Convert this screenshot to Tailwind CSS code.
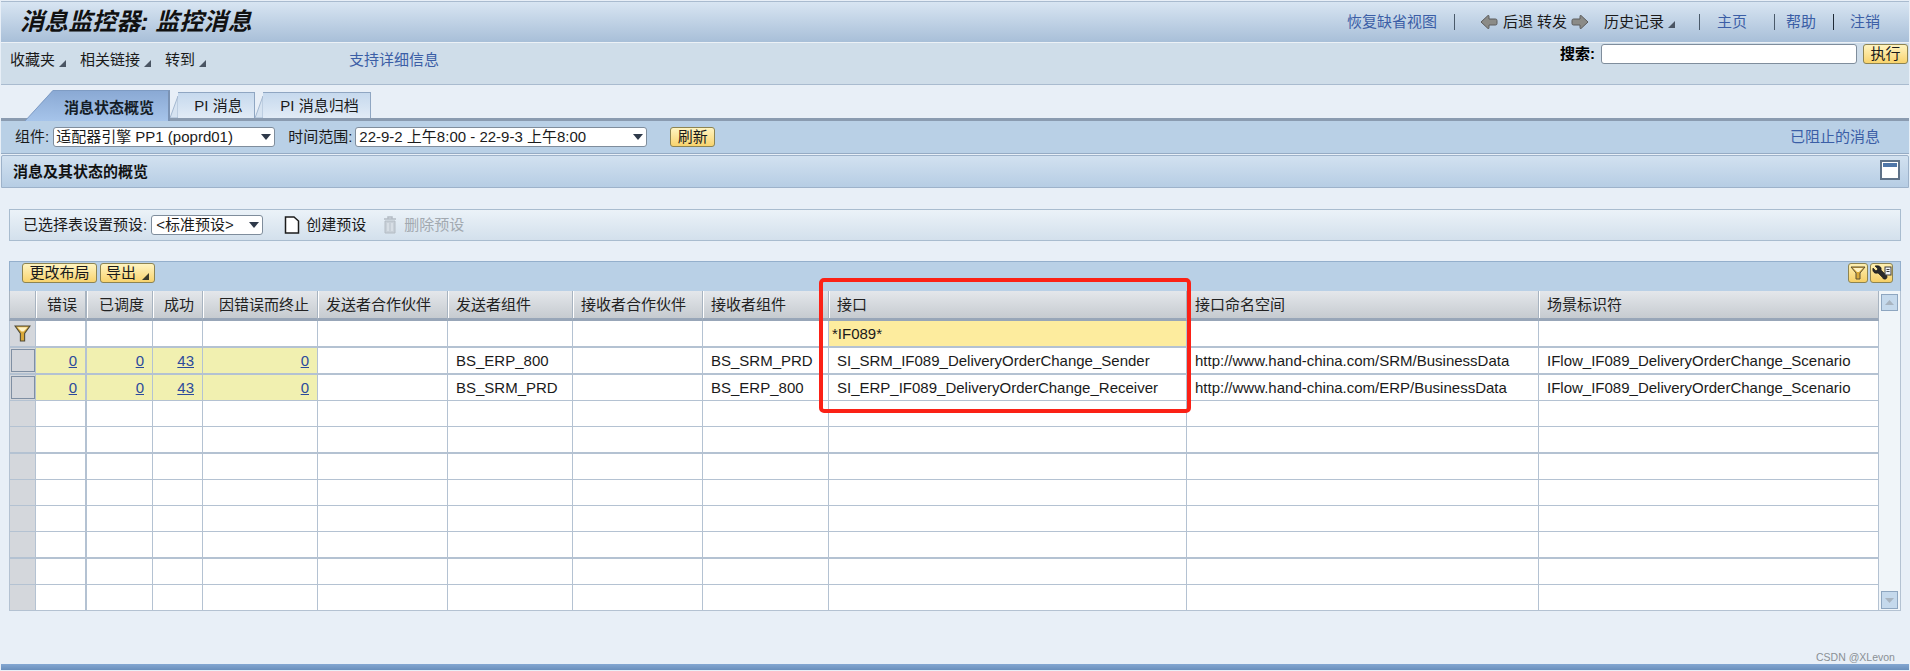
<!DOCTYPE html>
<html lang="zh-CN">
<head>
  <meta charset="UTF-8" />
  <title>消息监控器: 监控消息</title>
  <script src="https://cdn.jsdelivr.net/npm/@tailwindcss/browser@4"></script>
</head>
<body class="relative h-[671px] overflow-hidden bg-[#e8eff7] pt-px pl-px pr-px font-['Liberation_Sans','Noto_Sans_CJK_SC',sans-serif] text-[15px] leading-[18px] text-[#1a1a1a]">

  <!-- Title bar -->
  <header class="flex h-[41px] items-center border-t border-[#a9bbcf] bg-gradient-to-b from-[#d8e5f2] to-[#a8bfd8] pl-[19px] pr-[29px]">
    <h1 class="text-[24px] font-bold italic leading-[30px] tracking-[0.1px] text-[#111]">消息监控器: 监控消息</h1>
    <div class="ml-auto flex items-center text-[#3b5ea6]">
      <a>恢复缺省视图</a>
      <span class="ml-[17px] h-[16px] w-px bg-[#4a5a6a]"></span>
      <svg class="ml-[25px] h-[18px] w-[18px]" viewBox="0 0 18 18"><path d="M1 9 L8 2.500 Q9 2 9 3.500 V6 H15.500 Q17 6 17 7.500 V10.500 Q17 12 15.500 12 H9 V14.500 Q9 16 8 15.500 Z" fill="#8b8b87" stroke="#5c5c5c"/></svg>
      <span class="ml-[5px] text-[#1a1a1a]">后退</span>
      <span class="ml-[4px] text-[#1a1a1a]">转发</span>
      <svg class="ml-[4px] h-[18px] w-[18px]" viewBox="0 0 18 18"><path d="M17 9 L10 2.500 Q9 2 9 3.500 V6 H2.500 Q1 6 1 7.500 V10.500 Q1 12 2.500 12 H9 V14.500 Q9 16 10 15.500 Z" fill="#8b8b87" stroke="#5c5c5c"/></svg>
      <span class="ml-[15px] text-[#1a1a1a]">历史记录</span>
      <svg class="ml-[4px] mt-[5px] h-[7px] w-[7px]" viewBox="0 0 7 7"><path d="M7 0 V7 H0 Z" fill="#4a5563"/></svg>
      <span class="ml-[24px] h-[16px] w-px bg-[#4a5a6a]"></span>
      <a class="ml-[17px]">主页</a>
      <span class="ml-[27px] h-[16px] w-px bg-[#4a5a6a]"></span>
      <a class="ml-[11px]">帮助</a>
      <span class="ml-[17px] h-[16px] w-px bg-[#1f2a36]"></span>
      <a class="ml-[16px]">注销</a>
    </div>
  </header>

  <!-- Menu bar with search -->
  <div class="flex h-[43px] items-start border-y border-[#a9bbcf] border-t-white/60 bg-[#cfdde9] pl-[9px] pr-px">
    <div class="mt-[8px] flex items-center">
      <span>收藏夹</span>
      <svg class="ml-[4px] mt-[6px] h-[7px] w-[7px]" viewBox="0 0 7 7"><path d="M7 0 V7 H0 Z" fill="#4a5563"/></svg>
      <span class="ml-[14px]">相关链接</span>
      <svg class="ml-[4px] mt-[6px] h-[7px] w-[7px]" viewBox="0 0 7 7"><path d="M7 0 V7 H0 Z" fill="#4a5563"/></svg>
      <span class="ml-[14px]">转到</span>
      <svg class="ml-[4px] mt-[6px] h-[7px] w-[7px]" viewBox="0 0 7 7"><path d="M7 0 V7 H0 Z" fill="#4a5563"/></svg>
      <a class="ml-[143px] text-[#3b5ea6]">支持详细信息</a>
    </div>
    <div class="ml-auto mt-px flex items-center">
      <span class="font-bold text-black">搜索:</span>
      <input class="ml-[6px] h-[20px] w-[256px] rounded-[3px] border border-[#7f8d9c] bg-white" />
      <button class="ml-[6px] h-[20px] w-[45px] rounded-[3px] border border-[#8d8452] bg-gradient-to-b from-[#fff4c0] to-[#f8d36c] text-[15px] leading-[16px]">执行</button>
    </div>
  </div>

  <!-- Tabs -->
  <div class="mt-[5px] flex h-[28px] items-start pl-[24px]">
    <svg class="relative z-10 h-[31px] w-[29px] shrink-0" viewBox="0 0 29 31"><defs><linearGradient id="tabFill" x1="0" y1="0" x2="0" y2="1"><stop offset="0" stop-color="#8aa9d4"/><stop offset="1" stop-color="#a6c4ea"/></linearGradient></defs><path d="M0 31 L28 0 H29 V31 Z" fill="url(#tabFill)"/><path d="M0 31 L28 .5 H29" fill="none" stroke="#7f9cc4"/></svg>
    <div class="relative z-10 flex h-[31px] w-[116px] items-center justify-center border-t border-r-2 border-t-[#7f9cc4] border-r-[#7b93b4] bg-gradient-to-b from-[#8aa9d4] to-[#a6c4ea] pr-[4px] pt-[3px] font-bold text-[#141c26]">消息状态概览</div>
    <svg class="mt-[2px] h-[26px] w-[8px] shrink-0" viewBox="0 0 8 26"><path d="M0 26 L8 4 V26 Z" fill="#d6e3f1" stroke="#a4b8d0"/></svg>
    <div class="mt-[2px] flex h-[26px] w-[77px] items-center justify-center border-t border-r border-[#8fa6c2] bg-gradient-to-b from-[#c6d9ed] to-[#e1ebf6] pl-[5px]">PI 消息</div>
    <svg class="mt-[2px] h-[26px] w-[8px] shrink-0" viewBox="0 0 8 26"><path d="M0 26 L8 4 V26 Z" fill="#d6e3f1" stroke="#a4b8d0"/></svg>
    <div class="mt-[2px] flex h-[26px] w-[108px] items-center justify-center border-t border-r border-[#8fa6c2] bg-gradient-to-b from-[#c6d9ed] to-[#e1ebf6] pl-[6px]">PI 消息归档</div>
  </div>

  <!-- Filter bar -->
  <div class="flex h-[36px] items-center border-t-[3px] border-b border-t-[#8a9bb0] border-b-[#95abc4] bg-[#b9d0e6] pl-[14px] pr-[29px]">
    <span>组件:</span>
    <div class="ml-[4px] flex h-[20px] w-[222px] items-center justify-between rounded-[3px] border border-[#7f8d9c] bg-white pl-[2px] pr-[3px]">
      <span>适配器引擎 PP1 (poprd01)</span>
      <svg class="h-[6px] w-[10px]" viewBox="0 0 10 6"><path d="M0 0 H10 L5 6 Z" fill="#2f3a4a"/></svg>
    </div>
    <span class="ml-[13px]">时间范围:</span>
    <div class="ml-[3px] flex h-[20px] w-[292px] items-center justify-between rounded-[3px] border border-[#7f8d9c] bg-white pl-[3px] pr-[3px]">
      <span>22-9-2 上午8:00 - 22-9-3 上午8:00</span>
      <svg class="h-[6px] w-[10px]" viewBox="0 0 10 6"><path d="M0 0 H10 L5 6 Z" fill="#2f3a4a"/></svg>
    </div>
    <button class="ml-[23px] h-[20px] w-[45px] rounded-[3px] border border-[#8d8452] bg-gradient-to-b from-[#fff4c0] to-[#f8d36c] leading-[16px]">刷新</button>
    <a class="ml-auto text-[#3b5ea6]">已阻止的消息</a>
  </div>

  <!-- Section header -->
  <div class="mt-px flex h-[33px] items-center justify-between rounded-t-[2px] border border-[#9db2ca] bg-gradient-to-b from-[#d2e1f0] to-[#b6cde4] pl-[11px] pr-[8px]">
    <h2 class="font-bold text-[#111]">消息及其状态的概览</h2>
    <div class="-mt-[4px] h-[20px] w-[20px] border-2 border-[#5f7288] bg-white">
      <div class="mx-px mt-px h-[4px] bg-[#4f76a8]"></div>
    </div>
  </div>

  <div class="ml-[8px] mr-[8px]">
    <!-- Table presets -->
    <div class="mt-[21px] flex h-[32px] items-center border border-[#a9bccf] bg-gradient-to-b from-[#ebf2f8] to-[#d3e0ec] pl-[13px]">
      <span>已选择表设置预设:</span>
      <div class="ml-[4px] flex h-[20px] w-[112px] items-center justify-between rounded-[3px] border border-[#7f8d9c] bg-white pl-[4px] pr-[3px]">
        <span>&lt;标准预设&gt;</span>
        <svg class="h-[6px] w-[10px]" viewBox="0 0 10 6"><path d="M0 0 H10 L5 6 Z" fill="#2f3a4a"/></svg>
      </div>
      <svg class="ml-[21px] h-[18px] w-[16px]" viewBox="0 0 16 18"><path d="M1.500 1 H10 L14.500 5 V17 H1.500 Z" fill="#fff" stroke="#1c1c1c" stroke-width="1.500"/></svg>
      <span class="ml-[6px]">创建预设</span>
      <svg class="ml-[17px] h-[18px] w-[14px]" viewBox="0 0 14 18"><path d="M1 3 H13 M5 3 V1 H9 V3" fill="none" stroke="#b4bcc4" stroke-width="1.500"/><path d="M2 5 H12 V17 H2 Z" fill="#c8d0d8" stroke="#b4bcc4"/><path d="M5 7 V15 M9 7 V15" stroke="#e6ecf2"/></svg>
      <span class="ml-[7px] text-[#a2a9b0]">删除预设</span>
    </div>

    <!-- Table toolbar -->
    <div class="mt-[20px] flex h-[30px] items-start border border-b-0 border-[#94afcc] bg-[#b9d0e6] pl-[12px] pr-[7px] pt-px">
      <button class="h-[20px] w-[75px] rounded-[3px] border border-[#8d8452] bg-gradient-to-b from-[#fff4c0] to-[#f8d36c] leading-[16px]">更改布局</button>
      <button class="ml-[3px] flex h-[20px] w-[55px] items-center rounded-[3px] border border-[#8d8452] bg-gradient-to-b from-[#fff4c0] to-[#f8d36c] pl-[5px] leading-[16px]">导出
        <svg class="ml-[6px] mt-[6px] h-[7px] w-[7px]" viewBox="0 0 7 7"><path d="M7 0 V7 H0 Z" fill="#3a3a2a"/></svg>
      </button>
      <button class="ml-auto flex h-[20px] w-[20px] items-center justify-center rounded-[3px] border border-[#8d8452] bg-gradient-to-b from-[#fff0b0] to-[#f6cf66]">
        <svg class="h-[16px] w-[16px]" viewBox="0 0 16 16"><path d="M1 2 H15 L10 8 V14 H6 V8 Z" fill="#d9a93a" stroke="#5a5136"/><path d="M3 3 H13 L9 7 H7 Z" fill="#fff3c4"/></svg>
      </button>
      <button class="ml-[2px] flex h-[20px] w-[23px] items-center justify-center rounded-[3px] border border-[#8d8452] bg-gradient-to-b from-[#fff0b0] to-[#f6cf66]">
        <svg class="h-[16px] w-[20px]" viewBox="0 0 20 16"><path d="M1 3 L4 6 L6 4 L3 1 C7 0 10 2 9 5 L14 10 C16 11 15 15 12 14 C11 14 11 13 10 12 L6 8 C3 9 0 7 1 3 Z" fill="#2a2a2a" stroke="#111" stroke-width=".6"/><rect x="13" y="2" width="6" height="8" fill="#eef2f6" stroke="#3a3a3a"/><path d="M14.500 4.500 H17.500 M14.500 6.500 H17.500" stroke="#3a3a3a"/></svg>
      </button>
    </div>

    <!-- Table and its scrollbar -->
    <div class="flex">
      <table class="w-[1870px] table-fixed border-separate border-spacing-0">
        <colgroup>
          <col class="w-[27px]"><col class="w-[51px]"><col class="w-[66px]"><col class="w-[50px]"><col class="w-[115px]"><col class="w-[130px]"><col class="w-[125px]"><col class="w-[130px]"><col class="w-[126px]"><col class="w-[358px]"><col class="w-[352px]"><col class="w-[340px]">
        </colgroup>
        <thead>
          <tr id="tableHead"></tr>
        </thead>
        <tbody id="tableBody"></tbody>
      </table>
      <div class="flex h-[320px] w-[22px] flex-col justify-between border-r border-b border-[#b4c2d2] bg-[#f0f5f9] pb-px pl-[2px] pr-[2px] pt-[3px]">
        <div class="flex h-[17px] w-[17px] items-center justify-center border border-[#8ea6c0] bg-[#c5d9ec]">
          <svg class="h-[5px] w-[9px]" viewBox="0 0 9 5"><path d="M0 5 H9 L4.500 0 Z" fill="#a8b4c0"/></svg>
        </div>
        <div class="flex h-[18px] w-[17px] items-center justify-center border border-[#8ea6c0] bg-[#c5d9ec]">
          <svg class="h-[5px] w-[9px]" viewBox="0 0 9 5"><path d="M0 0 H9 L4.500 5 Z" fill="#a8b4c0"/></svg>
        </div>
      </div>
    </div>
  </div>

  <!-- Footer strip -->
  <div class="absolute bottom-px left-px right-px h-[6px] bg-gradient-to-b from-[#84a7d2] to-[#6a8fbc]"></div>

  <!-- Red marker drawn on the screenshot -->
  <div class="absolute left-[819px] top-[278px] h-[135px] w-[372px] rounded-[5px] border-4 border-[#fb2116]"></div>

  <!-- Watermark -->
  <div class="absolute left-[1816px] top-[650px] text-[10.5px] leading-[14px] text-[#8a8f95]">CSDN @XLevon</div>

  <script>
    const headers = ["错误", "已调度", "成功", "因错误而终止", "发送者合作伙伴", "发送者组件", "接收者合作伙伴", "接收者组件", "接口", "接口命名空间", "场景标识符"];
    const rows = [
      ["0", "0", "43", "0", "", "BS_ERP_800", "", "BS_SRM_PRD", "SI_SRM_IF089_DeliveryOrderChange_Sender", "http://www.hand-china.com/SRM/BusinessData", "IFlow_IF089_DeliveryOrderChange_Scenario"],
      ["0", "0", "43", "0", "", "BS_SRM_PRD", "", "BS_ERP_800", "SI_ERP_IF089_DeliveryOrderChange_Receiver", "http://www.hand-china.com/ERP/BusinessData", "IFlow_IF089_DeliveryOrderChange_Scenario"]
    ];
    // rows that end on a heavier rule
    const heavyRows = [0, 1, 4, 8];

    function renderHead() {
      let html = `<th class="h-[30px] border-l border-r border-b-[3px] border-[#a7b3c0] border-b-[#98a6b8] bg-gradient-to-b from-[#e4e7eb] to-[#c6cbd0]"></th>`;
      headers.forEach((text, i) => {
        const align = i < 4 ? "text-right" : "text-left";
        const right = i === 0 ? "border-r-2" : "border-r";
        html += `<th class="h-[30px] ${right} border-b-[3px] border-[#a7b3c0] border-b-[#98a6b8] bg-gradient-to-b from-[#e4e7eb] to-[#c6cbd0] px-[8px] font-normal shadow-[inset_1px_0_0_#fff] ${align} text-[#222]">${text}</th>`;
      });
      document.getElementById("tableHead").innerHTML = html;
    }

    function renderBody() {
      let html = "";
      for (let r = 0; r < 11; r++) {
        const bottom = heavyRows.includes(r) ? "h-[27px] border-b-2" : "h-[26px] border-b";
        const data = rows[r - 1];
        const selector = data
          ? `<div class="mx-auto h-[23px] w-[24px] border border-[#7f8fa3] bg-[#d3d6dc]"></div>`
          : r === 0
            ? `<svg class="mx-auto h-[17px] w-[17px]" viewBox="0 0 16 16"><path d="M1 1 H15 L10 8 V15 H6 V8 Z" fill="#d9a93a" stroke="#4f4a36"/><path d="M3 2 H13 L9 6 H7 Z" fill="#fff3c4"/></svg>`
            : "";
        html += `<tr><td class="${bottom} border-l border-r border-[#b4c2d2] bg-[#d4d7dc]">${selector}</td>`;
        headers.forEach((_, i) => {
          const right = i === 0 ? "border-r-2" : "border-r";
          let cell = "", extra = "bg-white px-[8px] whitespace-nowrap overflow-hidden";
          if (r === 0 && i === 8) {
            cell = "*IF089*";
            extra = "bg-[#fdec9e] px-[3px]";
          } else if (data && i < 4) {
            cell = `<a class="text-[#2c4a9c] underline">${data[i]}</a>`;
            extra = "bg-[#f1f0b0] px-[8px] text-right";
          } else if (data) {
            cell = data[i];
          }
          html += `<td class="${bottom} ${right} border-[#b4c2d2] ${extra}">${cell}</td>`;
        });
        html += "</tr>";
      }
      document.getElementById("tableBody").innerHTML = html;
    }

    renderHead();
    renderBody();
  </script>
</body>
</html>
